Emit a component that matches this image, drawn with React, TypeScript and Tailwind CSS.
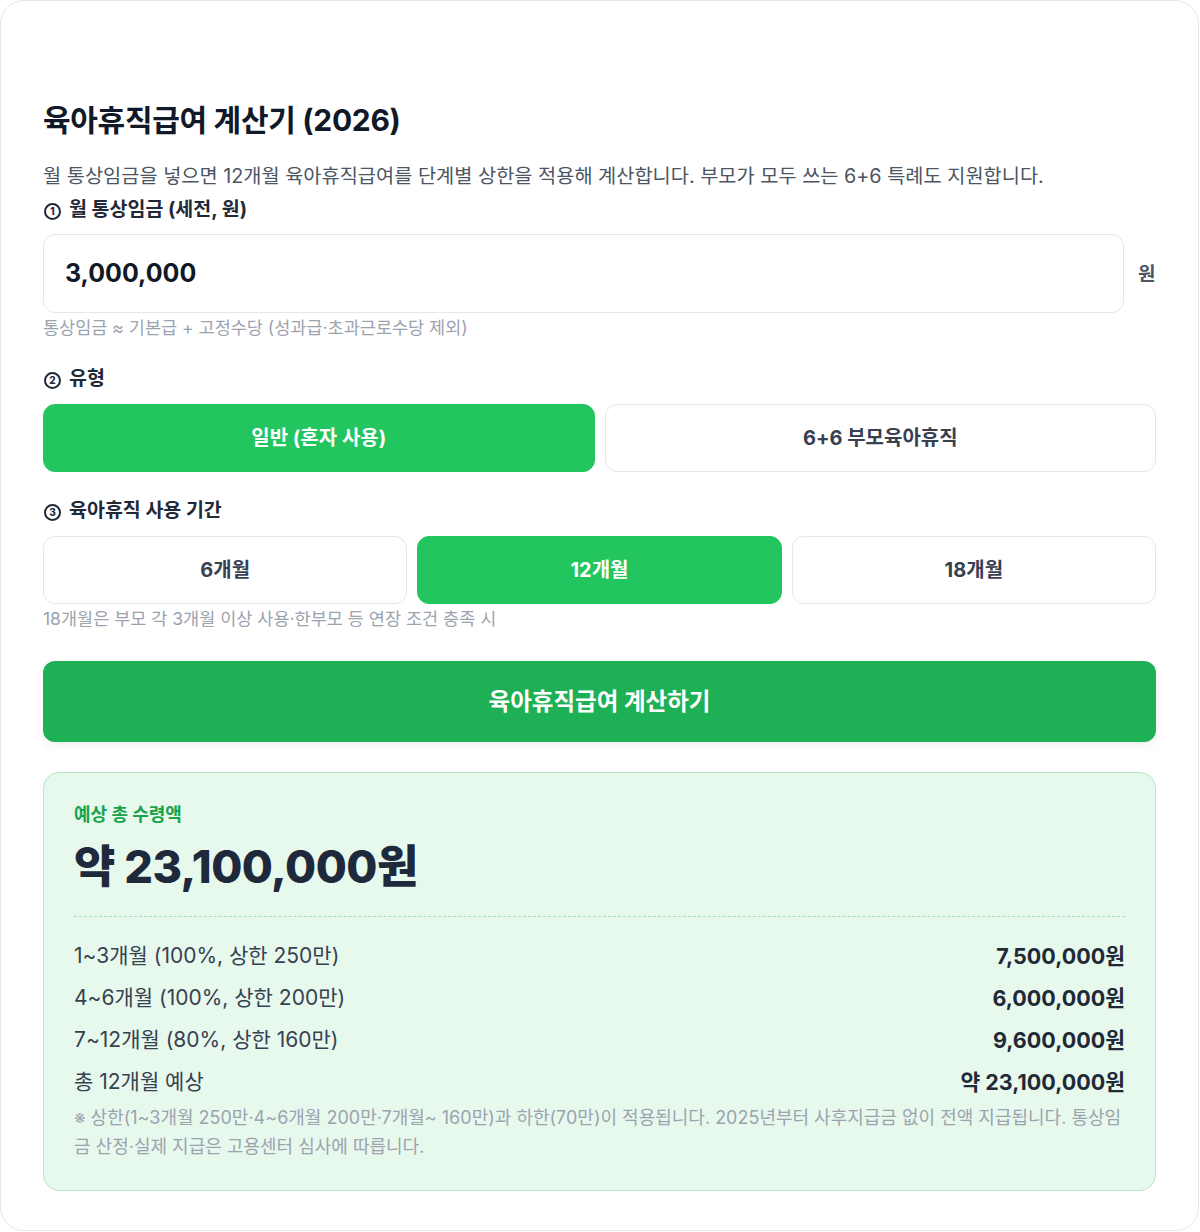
import { useState } from 'react';

const FONT = { fontFamily: 'Inter, "Noto Sans CJK KR", "Noto Sans", sans-serif' };

// circled step number, drawn small like the reference
function Step({ n }: { n: number }) {
  return (
    <span className="inline-flex items-center justify-center w-[17px] h-[17px] rounded-full border-[2px] border-[#1f2937] text-[10px] leading-none font-extrabold ml-[1px] mr-[8px] align-[1px]">
      {n}
    </span>
  );
}

export default function App() {
  const [kind, setKind] = useState<'normal' | 'six'>('normal');
  const [months, setMonths] = useState(12);

  const rows = [
    { label: '1~3개월 (100%, 상한 250만)', value: '7,500,000원' },
    { label: '4~6개월 (100%, 상한 200만)', value: '6,000,000원' },
    { label: '7~12개월 (80%, 상한 160만)', value: '9,600,000원' },
    { label: '총 12개월 예상', value: '약 23,100,000원' },
  ];

  const optionClass = (active: boolean) =>
    active
      ? 'flex-1 h-[68px] rounded-[12px] bg-[#22c55e] text-white text-[20px] font-bold border border-[#22c55e]'
      : 'flex-1 h-[68px] rounded-[12px] bg-white text-[#374151] text-[20px] font-bold border border-[#e5e7eb]';

  return (
    <main className="min-h-[1232px] bg-white" style={FONT}>
      <div className="w-[1199px] h-[1231px] border border-[#e5e7eb] rounded-[24px] bg-white px-[42px] pt-[99px] flex flex-col">
        <h1 className="text-[30px] leading-[40px] font-bold text-[#111827] tracking-[-0.3px]">육아휴직급여 계산기 (2026)</h1>
        <p className="mt-[22px] text-[19.75px] leading-[28px] text-[#4b5563]">
          월 통상임금을 넣으면 12개월 육아휴직급여를 단계별 상한을 적용해 계산합니다. 부모가 모두 쓰는 6+6 특례도 지원합니다.
        </p>

        <label className="mt-[6px] text-[19.5px] leading-[26px] font-bold text-[#1f2937]"><Step n={1} />월 통상임금 (세전, 원)</label>
        <div className="mt-[12px] flex items-center gap-[14px]">
          <div className="flex-1 h-[79px] rounded-[12px] border border-[#e5e7eb] flex items-center px-[21px]">
            <span className="text-[25px] font-bold text-[#111827]">3,000,000</span>
          </div>
          <span className="text-[19px] font-bold text-[#4b5563] w-[18px] mt-[3px]">원</span>
        </div>
        <p className="mt-[4px] text-[17.5px] leading-[22px] text-[#9ca3af]">통상임금 ≈ 기본급 + 고정수당 (성과급·초과근로수당 제외)</p>

        <label className="mt-[26px] text-[19.5px] leading-[26px] font-bold text-[#1f2937]"><Step n={2} />유형</label>
        <div className="mt-[13px] flex gap-[10px]">
          <button onClick={() => setKind('normal')} className={optionClass(kind === 'normal')}>일반 (혼자 사용)</button>
          <button onClick={() => setKind('six')} className={optionClass(kind === 'six')}>6+6 부모육아휴직</button>
        </div>

        <label className="mt-[25px] text-[19.5px] leading-[26px] font-bold text-[#1f2937]"><Step n={3} />육아휴직 사용 기간</label>
        <div className="mt-[13px] flex gap-[10px]">
          {[6, 12, 18].map(m => (
            <button key={m} onClick={() => setMonths(m)} className={optionClass(months === m)}>{m}개월</button>
          ))}
        </div>
        <p className="mt-[4px] text-[17.5px] leading-[22px] text-[#9ca3af]">18개월은 부모 각 3개월 이상 사용·한부모 등 연장 조건 충족 시</p>

        <button className="mt-[31px] h-[81px] rounded-[12px] bg-[#1eb054] text-white text-[23.5px] font-bold shadow-[0_4px_10px_rgba(0,0,0,0.06)]">
          육아휴직급여 계산하기
        </button>

        <section className="mt-[30px] rounded-[16px] border border-[#b9e6c8] bg-[#e7f8ed] px-[30px] pt-[31px] pb-[29px]">
          <div className="text-[18px] leading-[22px] font-bold text-[#16a34a]">예상 총 수령액</div>
          <div className="mt-[17px] text-[45px] leading-[48px] font-extrabold text-[#1e293b] tracking-[-0.5px]">약 23,100,000원</div>
          <div className="mt-[25px] border-t border-dashed border-[#a7dcb9]" />
          <div className="mt-[25px] flex flex-col gap-[14px]">
            {rows.map(r => (
              <div key={r.label} className="flex justify-between items-center text-[21px] leading-[28px]">
                <span className="text-[#374151]">{r.label}</span>
                <span className="font-bold text-[#1f2937] text-[21.5px]">{r.value}</span>
              </div>
            ))}
          </div>
          <p className="mt-[7px] text-[18px] leading-[29px] text-[#9ca3af]">
            ※ 상한(1~3개월 250만·4~6개월 200만·7개월~ 160만)과 하한(70만)이 적용됩니다. 2025년부터 사후지급금 없이 전액 지급됩니다. 통상임금 산정·실제 지급은 고용센터 심사에 따릅니다.
          </p>
        </section>
      </div>
    </main>
  );
}
